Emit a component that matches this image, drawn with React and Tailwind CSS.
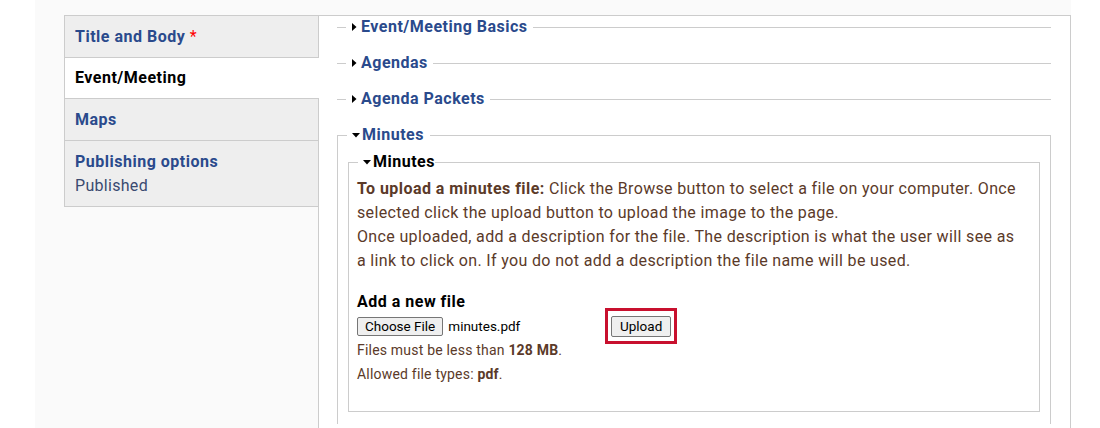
import React from 'react';

const TriRight = () => (
  <svg width="5" height="8" viewBox="0 0 5 8" className="mr-[4px] shrink-0">
    <path d="M0 0 L4.5 4 L0 8 Z" fill="#000" />
  </svg>
);

const TriDown = () => (
  <svg width="8" height="5" viewBox="0 0 8 5" className="mr-[2px] shrink-0">
    <path d="M0 0 L8 0 L4 4.5 Z" fill="#000" />
  </svg>
);

const tabs = [
  { label: 'Title and Body', required: true, pad: 'pt-[9px] pb-[8px]' },
  { label: 'Event/Meeting', active: true, pad: 'pt-[8px] pb-[8px]' },
  { label: 'Maps', pad: 'pt-[9px] pb-[8px]' },
  { label: 'Publishing options', sub: 'Published', pad: 'pt-[9px] pb-[9px]' },
];

const Collapsed = ({ title }) => (
  <fieldset className="border-0 border-t border-[#cccccc] pl-[9px] mb-[14px] min-w-0">
    <legend className="pl-[6px] pr-[5px] h-[22px] flex items-center">
      <TriRight />
      <span className="text-[16px] font-bold leading-[22px] tracking-[0.5px] text-[#2a4a8c]">{title}</span>
    </legend>
  </fieldset>
);

export default function App() {
  return (
    <div className="min-h-screen bg-white pl-[35px] font-['Roboto',sans-serif]">
      <div className="w-[1036px] min-h-[428px] bg-[#fafafa] pl-[29px] pt-[15px] flex">
        {/* vertical tabs */}
        <div className="w-[255px] flex flex-col shrink-0">
          {tabs.map((t, i) => (
            <div
              key={t.label}
              className={`border-l border-b border-[#cccccc] pl-[10px] ${t.pad} ${i === 0 ? 'border-t' : ''} ${
                t.active ? 'bg-white' : 'bg-[#eeeeee] border-r'
              }`}
            >
              <div
                className={`text-[16px] font-bold leading-[24px] tracking-[0.5px] ${
                  t.active ? 'text-black' : 'text-[#2a4a8c]'
                }`}
              >
                {t.label}
                {t.required && <span className="text-[#ff0000] font-normal"> *</span>}
              </div>
              {t.sub && <div className="text-[16px] leading-[23px] tracking-[0.3px] text-[#3a4a70]">{t.sub}</div>}
            </div>
          ))}
          <div className="flex-1 border-r border-[#cccccc]" />
        </div>

        {/* panel */}
        <div className="flex-1 bg-white border-t border-r border-[#cccccc] pl-[18px] pr-[19px]">
          <Collapsed title="Event/Meeting Basics" />
          <Collapsed title="Agendas" />
          <Collapsed title="Agenda Packets" />

          <fieldset className="border border-b-0 border-[#cccccc] pl-[9px] pr-[10px] min-w-0 min-h-[300px]">
            <legend className="pl-[5px] pr-[6px] h-[22px] flex items-center">
              <TriDown />
              <span className="text-[16px] font-bold leading-[22px] tracking-[0.5px] text-[#2a4a8c]">Minutes</span>
            </legend>

            <fieldset className="ml-[1px] mt-[5px] border border-[#cccccc] pl-[8px] pr-[15px] pb-[25px] min-w-0">
              <legend className="ml-[1px] pl-[5px] h-[22px] flex items-center">
                <TriDown />
                <span className="text-[16px] font-bold leading-[22px] tracking-[0.5px] text-black">Minutes</span>
              </legend>

              <p className="pt-[4px] text-[16px] leading-[24px] tracking-[0.35px] text-[#5b3a29]">
                <strong className="tracking-[0.45px]">To upload a minutes file:</strong> Click the Browse button to select
                a file on your computer. Once selected click the upload button to upload the image to the page.
                <br />
                Once uploaded, add a description for the file. The description is what the user will see as a link to
                click on. If you do not add a description the file name will be used.
              </p>

              <div className="mt-[17px] text-[16px] font-bold leading-[24px] tracking-[0.5px] text-black">
                Add a new file
              </div>

              <div className="flex items-center -mt-[6px]">
                <div className="w-[248px] flex items-center text-[13.5px] text-black">
                  <button className="h-[19px] px-[7px] bg-[#efefef] border border-[#767676] rounded-[2px] text-[13.5px] leading-[15px] text-black">
                    Choose File
                  </button>
                  <span className="ml-[5px] leading-[15px]">minutes.pdf</span>
                </div>
                <div className="border-[3px] border-[#c8102e] p-[3px]">
                  <button className="h-[21px] px-[8px] bg-[#efefef] border border-[#767676] rounded-[2px] text-[13.5px] leading-[15px] text-black">
                    Upload
                  </button>
                </div>
              </div>

              <div className="text-[14px] leading-[24px] tracking-[0.2px] text-[#5b3a29] -mt-[6px]">
                Files must be less than <strong>128 MB</strong>.
              </div>
              <div className="text-[14px] leading-[24px] tracking-[0.2px] text-[#5b3a29]">
                Allowed file types: <strong>pdf</strong>.
              </div>
            </fieldset>
          </fieldset>
        </div>
      </div>
    </div>
  );
}
